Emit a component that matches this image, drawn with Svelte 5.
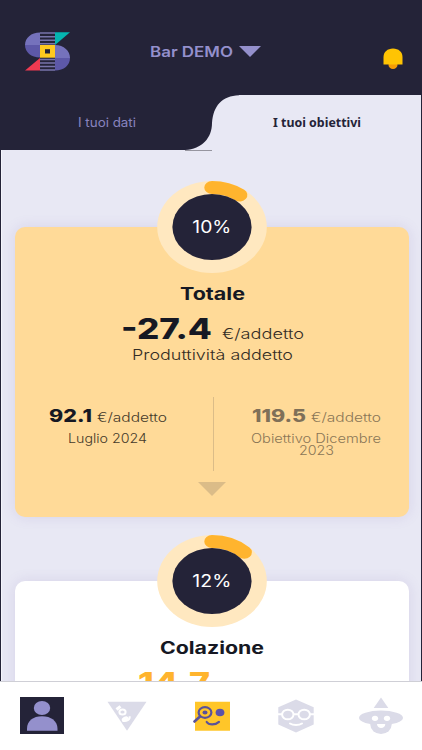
<script>
  const ringLength = 100

  const cards = [
    {
      name: 'Totale',
      nameWidth: 65,
      percent: 10,
      value: '-27.4',
      valueWidth: 91,
      tone: 'total',
      open: true
    },
    {
      name: 'Colazione',
      nameWidth: 104,
      percent: 12,
      value: '14.7',
      valueWidth: 72,
      tone: 'plain',
      open: false
    }
  ]
</script>

{#snippet label(text, width, height, baseline, type)}
  <svg class="label {type}" {width} {height}>
    <text x="0" y={baseline} textLength={width} lengthAdjust="spacingAndGlyphs">{text}</text>
  </svg>
{/snippet}

<div class="app">
  <header>
    <svg class="logo" width="45" height="39" viewBox="0 0 45 39">
      <path d="M15 .5C6 .5 0 6 0 13h15z" fill="#7572bc" />
      <path d="M0 13c0 7 6 12.5 15 12.5V13z" fill="#5d58a8" />
      <path d="M30 13c9 0 15 6 15 13H30z" fill="#7572bc" />
      <path d="M30 26h15c0 7-6 12.5-15 12.5z" fill="#5d58a8" />
      <path d="M15 1h15M15 4.7h15M15 8.2h15M15 11.7h15M15 27.5h15M15 31h15M15 34.5h15M15 38h15" stroke="#7774aa" stroke-width="1.5" />
      <path d="M30 .3h15L30 13z" fill="#05b5b0" />
      <path d="M15 26v12.5H0z" fill="#ef3a51" />
      <path d="M15 13h15v12.7H15z" fill="#ffc91f" />
      <path d="M20 17.2h5v4.3h-5z" fill="#242338" />
    </svg>
    <div class="place">
      {@render label('Bar DEMO', 83, 20, 15, 'bar')}
      <svg width="22" height="11" viewBox="0 0 22 11"><path d="M0 0h22L11 11z" fill="#9490cc" /></svg>
    </div>
    <svg class="bell" width="20" height="22" viewBox="0 0 20 22">
      <ellipse cx="10" cy="17" rx="4.5" ry="4" fill="#f59c05" />
      <path d="M.5 16.5V9C.5 4 4.5.5 10 .5S19.5 4 19.5 9v7.5z" fill="#ffc403" />
    </svg>
  </header>

  <nav class="tabs">
    <div class="tab">{@render label('I tuoi dati', 58, 20, 14.4, 'dati')}</div>
    <svg class="curve" width="54" height="56" viewBox="0 0 54 56">
      <path d="M0 55C17 54 27 43 27 28C28 11 37 1 54 .3V56H0z" fill="#e8e8f4" />
      <path d="M0 55.5h27" stroke="#96959f" />
    </svg>
    <div class="tab active">{@render label('I tuoi obiettivi', 88, 20, 14.4, 'obiettivi')}</div>
  </nav>

  <main>
    {#each cards as card}
      <section class="card {card.tone}">
        <svg class="ring" width="110" height="92" viewBox="0 0 110 92" preserveAspectRatio="none">
          <ellipse cx="55" cy="46" rx="54.8" ry="46" fill="#ffe8c0" />
          <g transform="translate(55 46) scale(1.19 1) rotate(-90)">
            <circle
              class="progress"
              r="39.5"
              pathLength={ringLength}
              stroke-dasharray="{card.percent} {ringLength}"
            />
          </g>
          <ellipse cx="55" cy="46" rx="39.6" ry="33" fill="#242338" />
          <text class="percent" x="35.3" y="52.3" textLength="39" lengthAdjust="spacingAndGlyphs">{card.percent}%</text>
        </svg>
        {@render label(card.name, card.nameWidth, 20, 16.5, 'name')}
        <div class="value">
          {@render label(card.value, card.valueWidth, 31, 27, 'big')}
          {#if card.open}
            {@render label('€/addetto', 82, 31, 27.3, 'unit')}
          {/if}
        </div>
        {#if card.open}
          {@render label('Produttività addetto', 161, 20, 15, 'caption')}
          <div class="compare">
            <div class="current">
              <div class="amount">
                {@render label('92.1', 43, 22, 17, 'number')}
                {@render label('€/addetto', 70, 22, 17, 'small')}
              </div>
              {@render label('Luglio 2024', 79, 12, 11, 'small')}
            </div>
            <div class="goal">
              <div class="amount">
                {@render label('119.5', 54, 22, 17, 'number')}
                {@render label('€/addetto', 70, 22, 17, 'small')}
              </div>
              {@render label('Obiettivo Dicembre', 130, 12, 11, 'small')}
              {@render label('2023', 35, 12, 11.4, 'small')}
            </div>
          </div>
          <svg class="more" width="28" height="14" viewBox="0 0 28 14"><path d="M0 0h28L14 14z" fill="#dbbc88" /></svg>
        {/if}
      </section>
    {/each}
  </main>

  <footer>
    <svg width="44" height="37" viewBox="0 0 44 37">
      <path d="M0 0h44v37H0z" fill="#242338" />
      <ellipse cx="22" cy="11" rx="8.2" ry="6.9" fill="#9490cc" />
      <path d="M7 33.7v-2C7 24 13 19.2 22 19.2s15.5 4.8 15.5 12.5v2z" fill="#9490cc" />
    </svg>
    <svg width="40" height="37" viewBox="0 0 40 37">
      <path d="M.5 4.7h39L20 33.7z" fill="#dbdbe8" />
      <g fill="none" stroke="#fff" stroke-width="2">
        <ellipse cx="15.5" cy="15" rx="3.1" ry="2.5" />
        <path d="M9.5 12.5l4-3.2" stroke-width="3" />
        <path d="M15.5 23.8c4 .8 8-1.3 7-4.5" />
      </g>
      <ellipse cx="18" cy="22" rx="3.5" ry="2.3" fill="#fff" transform="rotate(-30 18 22)" />
    </svg>
    <svg width="38" height="37" viewBox="0 0 38 37">
      <path d="M2 4.7h35v29H2z" fill="#ffc629" />
      <g fill="none" stroke="#5a5299" stroke-width="2.2" stroke-linecap="round">
        <ellipse cx="12" cy="15.5" rx="6.4" ry="5.3" />
        <path d="M7 19.5l-5.5 5" stroke-width="2.6" />
        <path d="M13.7 25c2 3.2 8.5 3.4 12.3-.1" />
      </g>
      <ellipse cx="12" cy="15.5" rx="2.5" ry="2.1" fill="#5a5299" />
      <ellipse cx="27" cy="15.5" rx="4.4" ry="3.8" fill="#5b52a9" />
    </svg>
    <svg width="36" height="37" viewBox="0 0 36 37">
      <path d="M18 2.4l17.7 7.8v17.2L18 35.4.3 27.4V10.2z" fill="#dbdbe8" />
      <g fill="none" stroke="#fff" stroke-width="2">
        <ellipse cx="9.8" cy="17.5" rx="5.7" ry="4.8" />
        <ellipse cx="26.2" cy="17.5" rx="5.7" ry="4.8" />
        <path d="M0 17.2h4M15.5 17.2h5M32 17.2h4" />
        <path d="M12 26.5c3 2 9 2 12 0" stroke-linecap="round" />
      </g>
    </svg>
    <svg width="44" height="37" viewBox="0 0 44 37">
      <path d="M22 .5L29.3 11H14.7z" fill="#dbdbe8" />
      <ellipse cx="22" cy="20.8" rx="22" ry="7.3" fill="#dbdbe8" />
      <ellipse cx="22" cy="27.5" rx="10.7" ry="9.5" fill="#dbdbe8" />
      <ellipse cx="16" cy="21.3" rx="3.1" ry="2.6" fill="#fff" />
      <ellipse cx="28" cy="21.3" rx="3.1" ry="2.6" fill="#fff" />
      <path d="M18 27h8.3c0 5.4-8.3 5.4-8.3 0z" fill="#fff" />
    </svg>
  </footer>
</div>

<style>
  .app {
    display: flex;
    flex-direction: column;
    width: 422px;
    height: 750px;
    overflow: hidden;
    background: #242338;
    font-family: Inter, Roboto, sans-serif;
  }

  svg {
    display: block;
    flex: none;
  }

  .label {
    overflow: visible;
  }

  header {
    display: flex;
    flex: none;
    box-sizing: border-box;
    height: 95px;
    padding: 32px 19px 0 25px;
  }

  .place {
    display: flex;
    align-items: center;
    gap: 6px;
    height: 20px;
    margin: 9.5px 0 0 80px;
  }

  .bell {
    margin: 16px 0 0 auto;
  }

  .tabs {
    display: flex;
    flex: none;
    height: 56px;
  }

  .tab {
    display: flex;
    box-sizing: border-box;
    width: 185px;
    padding: 18px 0 0 78px;
  }

  .tab.active {
    width: 182px;
    padding-left: 34px;
    background: #e8e8f4;
  }

  main {
    flex: 1;
    min-height: 0;
    margin: -1px 1px 0 1px;
    padding: 77px 12px 0 13px;
    overflow: hidden;
    border-left: 1px solid #f5f5fc;
    background: #e8e8f4;
  }

  .curve {
    position: relative;
  }

  .card {
    display: flex;
    flex-direction: column;
    align-items: center;
    height: 290px;
    margin-bottom: 64px;
    border-radius: 10px;
    background: #fff;
    box-shadow: 0 0 14px rgba(110, 85, 170, .14);
  }

  .card.total {
    background: #ffda98;
  }

  .ring {
    margin: -46px 0 10px;
  }

  .progress {
    fill: none;
    stroke: #ffb42e;
    stroke-width: 13;
    stroke-linecap: round;
  }

  .percent {
    fill: #fff;
    font-size: 17px;
  }

  .value {
    display: flex;
    gap: 10px;
    margin: 9px 0 2px;
  }

  .plain .value {
    padding-right: 76px;
  }

  .compare {
    display: flex;
    width: 100%;
    height: 74px;
    margin: 32px 0 11px;
  }

  .current, .goal {
    display: flex;
    flex: 1;
    flex-direction: column;
    align-items: center;
    box-sizing: border-box;
    padding: 8px 12px 0 0;
  }

  .goal {
    padding: 8px 0 0 10px;
    border-left: 1px solid #dbbc88;
  }

  .amount {
    display: flex;
    gap: 5px;
    margin-bottom: 5px;
  }

  .bar {
    fill: #9490cc;
    font-size: 14.3px;
    font-weight: 600;
  }

  .dati {
    fill: #8883bf;
    font-size: 12.4px;
  }

  .obiettivi {
    fill: #242338;
    font: 700 12.6px "Noto Sans", sans-serif;
  }

  .name {
    fill: #161823;
    font-size: 17px;
    font-weight: 700;
  }

  .big {
    fill: #161823;
    font-size: 28px;
    font-weight: 800;
  }

  .plain .big {
    fill: #ffb42e;
  }

  .unit, .caption {
    fill: #342d25;
    font-size: 14.5px;
    font-weight: 300;
  }

  .number {
    fill: #161823;
    font-size: 17.5px;
    font-weight: 800;
  }

  .small {
    fill: #44392a;
    font-size: 12.6px;
    font-weight: 300;
  }

  .goal .number {
    fill: #7f7058;
  }

  .goal .small {
    fill: #8a7656;
  }

  footer {
    display: grid;
    grid-template-columns: repeat(5, 84.7px);
    justify-items: center;
    flex: none;
    box-sizing: border-box;
    height: 69px;
    padding-top: 15px;
    overflow: hidden;
    border-top: 1px solid #cfcfd6;
    background: #fff;
  }
</style>
